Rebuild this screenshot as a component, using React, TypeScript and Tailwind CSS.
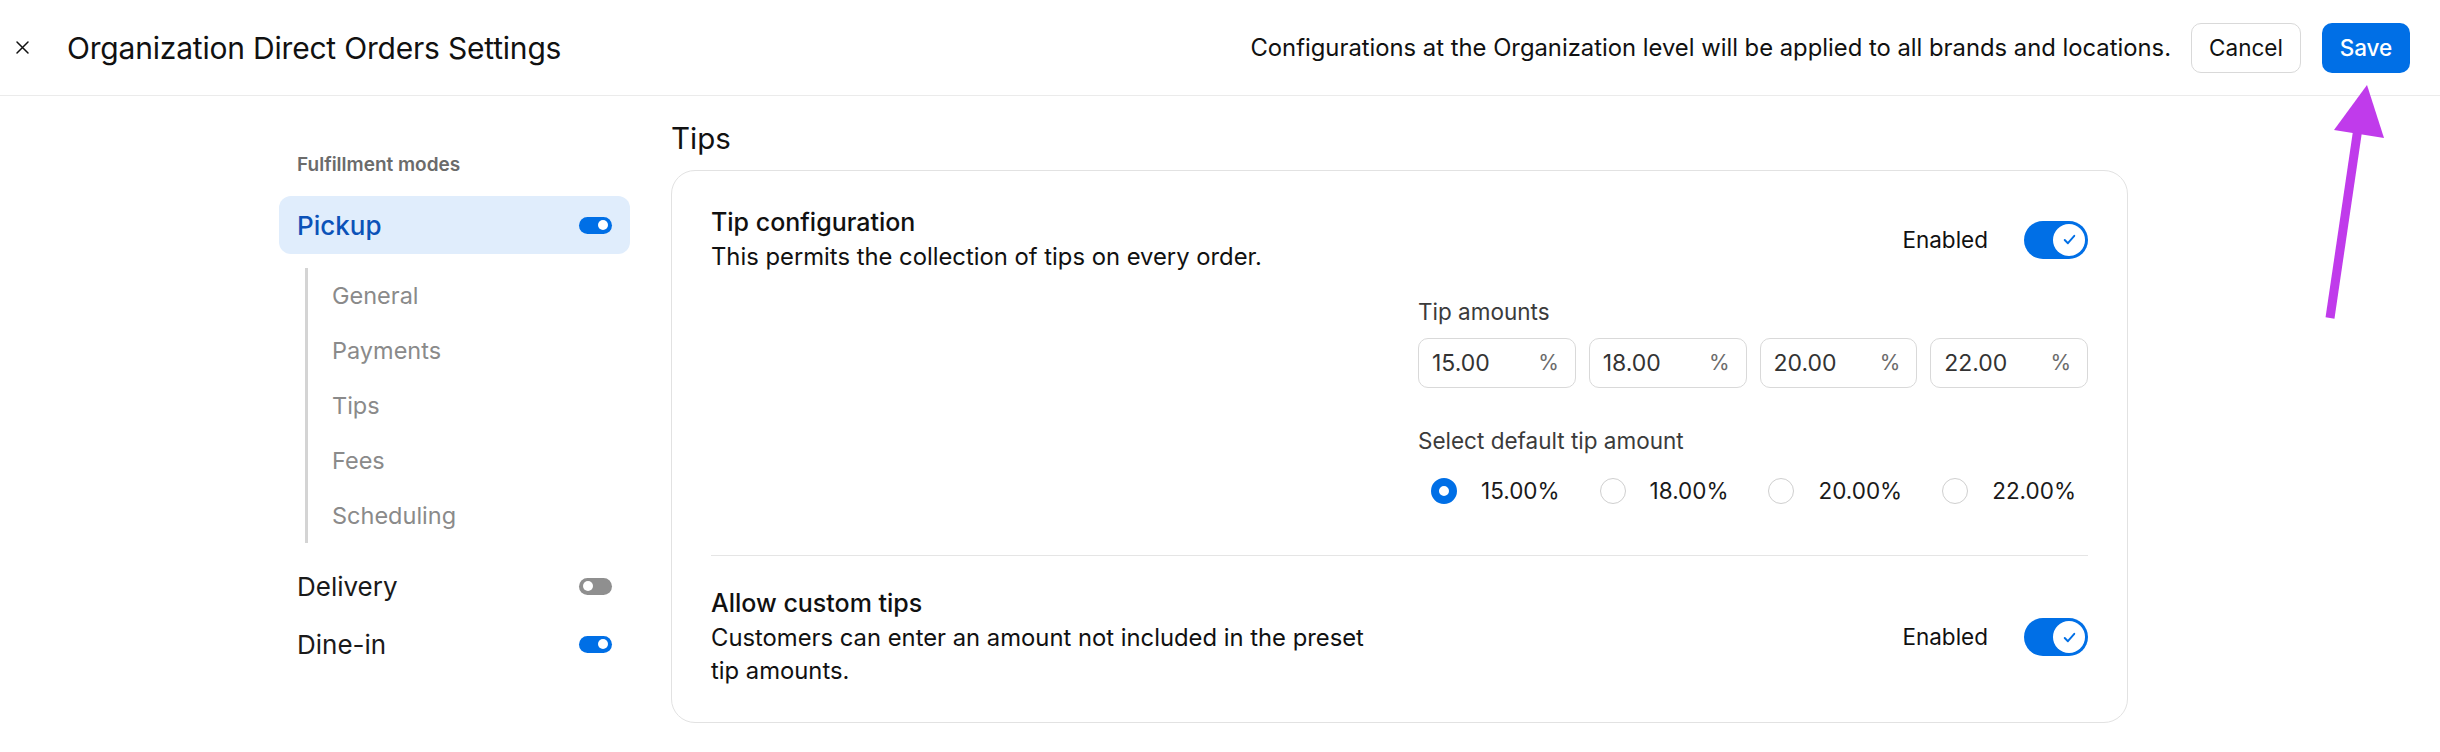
import React from "react";

function SmallToggle({ on }: { on: boolean }) {
  return (
    <div
      className={`flex h-[17px] w-[33px] items-center rounded-full px-[4px] ${
        on ? "justify-end bg-[#006fe6]" : "justify-start bg-[#8f8f8f]"
      }`}
    >
      <div className="h-[10px] w-[10px] rounded-full bg-white" />
    </div>
  );
}

function BigToggle() {
  return (
    <div className="flex h-[38px] w-[64px] items-center justify-end rounded-full bg-[#006fe6] pr-[3px]">
      <div className="flex h-[32px] w-[32px] items-center justify-center rounded-full bg-white">
        <svg width="17" height="17" viewBox="0 0 16 16" fill="none">
          <path d="M3.5 8.5l3 3 6-7" stroke="#006fe6" strokeWidth="1.8" strokeLinecap="round" strokeLinejoin="round" />
        </svg>
      </div>
    </div>
  );
}

function Radio({ checked, label }: { checked: boolean; label: string }) {
  return (
    <div className="flex items-center gap-[24px]">
      {checked ? (
        <div className="h-[26px] w-[26px] rounded-full border-[8px] border-[#006fe6] bg-white" />
      ) : (
        <div className="h-[26px] w-[26px] rounded-full border border-[#cfcfcf] bg-white" />
      )}
      <span className="text-[22.5px] leading-[30px] text-[#1a1a1a]">{label}</span>
    </div>
  );
}

export default function App() {
  const subItems = ["General", "Payments", "Tips", "Fees", "Scheduling"];
  const amounts = ["15.00", "18.00", "20.00", "22.00"];
  return (
    <div
      className="relative h-[752px] w-[2440px] overflow-hidden bg-white text-[#111]"
      style={{ fontFamily: "Inter, 'Noto Sans', sans-serif" }}
    >
      {/* Header */}
      <header className="flex h-[96px] items-center border-b border-[#ebebeb] pl-[15px] pr-[30px]">
        <svg width="15" height="15" viewBox="0 0 15 15" fill="none" className="shrink-0">
          <path d="M2 2l11 11M13 2L2 13" stroke="#111" strokeWidth="1.5" strokeLinecap="round" />
        </svg>
        <h1 className="ml-[37px] text-[30px] font-normal leading-[38px] tracking-[-0.2px]">
          Organization Direct Orders Settings
        </h1>
        <div className="ml-auto flex items-center">
          <p className="text-[23.8px] leading-[32px]">
            Configurations at the Organization level will be applied to all brands and locations.
          </p>
          <button className="ml-[20px] flex h-[50px] w-[110px] items-center justify-center rounded-[10px] border border-[#d9d9d9] bg-white text-[22.5px] text-[#111]">
            Cancel
          </button>
          <button className="ml-[21px] flex h-[50px] w-[88px] items-center justify-center rounded-[10px] bg-[#006fe6] text-[22.5px] font-medium text-white">
            Save
          </button>
        </div>
      </header>

      {/* Body */}
      <div className="flex pl-[279px]">
        {/* Sidebar */}
        <aside className="w-[351px] shrink-0 pt-[56px]">
          <div className="pl-[18px] text-[19px] font-semibold leading-[26px] text-[#6b6b6b]">
            Fulfillment modes
          </div>
          <div className="mt-[18px] flex h-[58px] items-center justify-between rounded-[12px] bg-[#e0edfc] pl-[18px] pr-[18px]">
            <span className="text-[26px] font-medium text-[#0b52b8]">Pickup</span>
            <SmallToggle on />
          </div>
          <div className="ml-[26px] mt-[14px] border-l-[3px] border-[#d4d4d4]">
            {subItems.map((s) => (
              <div key={s} className="flex h-[55px] items-center pl-[24px] text-[23.5px] text-[#8a8a8a]">
                {s}
              </div>
            ))}
          </div>
          <div className="mt-[14px] flex h-[58px] items-center justify-between pl-[18px] pr-[18px]">
            <span className="text-[26px] text-[#1a1a1a]">Delivery</span>
            <SmallToggle on={false} />
          </div>
          <div className="flex h-[58px] items-center justify-between pl-[18px] pr-[18px]">
            <span className="text-[26px] text-[#1a1a1a]">Dine-in</span>
            <SmallToggle on />
          </div>
        </aside>

        {/* Main */}
        <main className="ml-[41px] w-[1457px] pt-[24px]">
          <h2 className="text-[29.5px] font-normal leading-[36px]">Tips</h2>
          <section className="mt-[14px] rounded-[24px] border border-[#e2e2e2] px-[39px] pb-[35px] pt-[35px]">
            <div className="flex items-center justify-between">
              <div>
                <div className="text-[25px] font-medium leading-[32px]">Tip configuration</div>
                <div className="mt-[2px] text-[23.8px] leading-[33px]">
                  This permits the collection of tips on every order.
                </div>
              </div>
              <div className="flex items-center gap-[36px]">
                <span className="text-[22.5px] leading-[30px]">Enabled</span>
                <BigToggle />
              </div>
            </div>

            <div className="ml-auto mt-[24px] w-[670px]">
              <div className="text-[22.5px] leading-[30px] text-[#3b3b3b]">Tip amounts</div>
              <div className="mt-[11px] grid grid-cols-4 gap-[13px]">
                {amounts.map((a) => (
                  <div
                    key={a}
                    className="flex h-[50px] items-center justify-between rounded-[10px] border border-[#d9d9d9] pl-[13px] pr-[16px]"
                  >
                    <span className="text-[23px] text-[#333]">{a}</span>
                    <span className="text-[21px] text-[#6b6b6b]">%</span>
                  </div>
                ))}
              </div>
              <div className="mt-[38px] text-[22.5px] leading-[30px] text-[#3b3b3b]">
                Select default tip amount
              </div>
              <div className="mt-[20px] flex items-center justify-between pl-[13px] pr-[12px]">
                {amounts.map((a, i) => (
                  <Radio key={a} checked={i === 0} label={`${a}%`} />
                ))}
              </div>
            </div>

            <div className="mt-[49px] border-t border-[#e5e5e5]" />

            <div className="mt-[31px] flex items-center justify-between">
              <div className="w-[680px]">
                <div className="text-[25px] font-medium leading-[32px]">Allow custom tips</div>
                <div className="mt-[2px] text-[23.8px] leading-[33px]">
                  Customers can enter an amount not included in the preset tip amounts.
                </div>
              </div>
              <div className="flex items-center gap-[36px]">
                <span className="text-[22.5px] leading-[30px]">Enabled</span>
                <BigToggle />
              </div>
            </div>
          </section>
        </main>
      </div>

      {/* Annotation arrow */}
      <svg
        className="pointer-events-none absolute left-0 top-0"
        width="2440"
        height="752"
        viewBox="0 0 2440 752"
      >
        <line x1="2330" y1="318" x2="2358" y2="128" stroke="#c03beb" strokeWidth="9" />
        <polygon points="2367,85 2334,130 2384,138" fill="#c03beb" />
      </svg>
    </div>
  );
}
